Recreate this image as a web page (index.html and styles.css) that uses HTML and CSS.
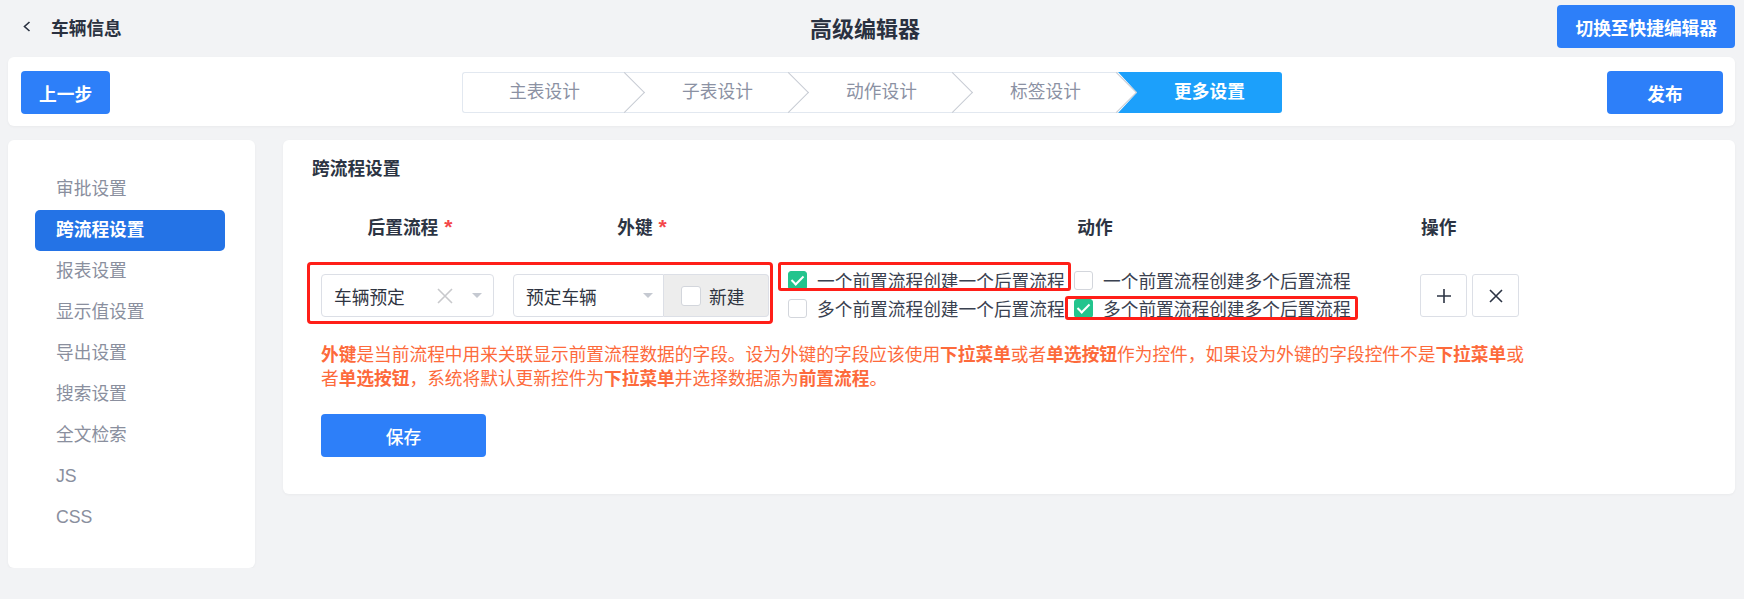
FILE: index.html
```html
<!DOCTYPE html>
<html lang="zh-CN">
<head>
    <meta charset="UTF-8">
    <meta name="viewport" content="width=device-width, initial-scale=1.0">
    <title>高级编辑器</title>
    <link rel="stylesheet" href="styles.css">
</head>
<body>

<header class="topbar">
    <div class="topbar-left">
        <svg class="back-icon" width="8" height="11" viewBox="0 0 8 11"><polyline points="6.5,1 1.5,5.5 6.5,10"/></svg>
        <span class="topbar-name">车辆信息</span>
    </div>
    <h1 class="topbar-title">高级编辑器</h1>
    <div class="topbar-right">
        <button class="btn btn-primary">切换至快捷编辑器</button>
    </div>
</header>

<div class="toolbar card">
    <button class="btn btn-primary">上一步</button>
    <ol class="steps">
        <li class="step">主表设计</li>
        <li class="step">子表设计</li>
        <li class="step">动作设计</li>
        <li class="step">标签设计</li>
        <li class="step active">更多设置</li>
    </ol>
    <button class="btn btn-primary btn-publish">发布</button>
</div>

<div class="workspace">
    <nav class="sidebar card">
        <a class="side-item">审批设置</a>
        <a class="side-item active">跨流程设置</a>
        <a class="side-item">报表设置</a>
        <a class="side-item">显示值设置</a>
        <a class="side-item">导出设置</a>
        <a class="side-item">搜索设置</a>
        <a class="side-item">全文检索</a>
        <a class="side-item">JS</a>
        <a class="side-item">CSS</a>
    </nav>

    <main class="panel card">
        <h2 class="panel-title">跨流程设置</h2>

        <div class="flow-head">
            <div class="col-prev">后置流程<span class="req">*</span></div>
            <div class="col-key">外键<span class="req">*</span></div>
            <div class="col-action">动作</div>
            <div class="col-op">操作</div>
        </div>

        <div class="flow-row">
            <div class="flow-fields">
                <div class="select select-prev">
                    <span>车辆预定</span>
                    <svg class="clear-icon" width="16" height="16" viewBox="0 0 16 16"><path d="M1 1 L15 15 M15 1 L1 15"/></svg>
                    <span class="caret"></span>
                </div>
                <div class="key-group">
                    <div class="select select-key">
                        <span>预定车辆</span>
                        <span class="caret"></span>
                    </div>
                    <label class="addon"><span class="checkbox"></span>新建</label>
                </div>
            </div>

            <div class="flow-actions">
                <label class="check-item marked mark-first"><span class="checkbox checked"></span>一个前置流程创建一个后置流程</label>
                <label class="check-item"><span class="checkbox"></span>一个前置流程创建多个后置流程</label>
                <label class="check-item"><span class="checkbox"></span>多个前置流程创建一个后置流程</label>
                <label class="check-item marked mark-last"><span class="checkbox checked"></span>多个前置流程创建多个后置流程</label>
            </div>

            <div class="flow-ops">
                <button class="icon-btn">
                    <svg width="16" height="16" viewBox="0 0 16 16"><path d="M8 1 V15 M1 8 H15"/></svg>
                </button>
                <button class="icon-btn">
                    <svg width="14" height="14" viewBox="0 0 14 14"><path d="M1 1 L13 13 M13 1 L1 13"/></svg>
                </button>
            </div>
        </div>

        <p class="flow-tip"><b>外键</b>是当前流程中用来关联显示前置流程数据的字段。设为外键的字段应该使用<b>下拉菜单</b>或者<b>单选按钮</b>作为控件，如果设为外键的字段控件不是<b>下拉菜单</b>或者<b>单选按钮</b>，系统将默认更新控件为<b>下拉菜单</b>并选择数据源为<b>前置流程</b>。</p>

        <button class="btn btn-primary btn-save">保存</button>
    </main>
</div>

</body>
</html>
```

FILE: styles.css
```css
body {
    margin: 0;
    padding: 0 9px 0 8px;
    font-family: "Liberation Sans", "Noto Sans CJK SC", sans-serif;
    font-size: 17.7px;
    background: #f2f3f5;
    color: #2c3443;
}

.card {
    background: #fff;
    border-radius: 6px;
    box-shadow: 0 1px 3px rgba(0, 0, 0, 0.04);
}

.btn {
    height: 43px;
    padding: 0 18px;
    border: none;
    border-radius: 4px;
    font-family: inherit;
    font-size: 17.7px;
    font-weight: bold;
    cursor: pointer;
}

.btn-primary {
    background: #2d7ff9;
    color: #fff;
}

/* top bar */
.topbar {
    display: grid;
    grid-template-columns: 1fr auto 1fr;
    align-items: center;
    height: 43px;
    padding: 5px 0 9px 15px;
}

.topbar-left {
    display: flex;
    align-items: center;
    gap: 20px;
}

.back-icon {
    fill: none;
    stroke: #2a3140;
    stroke-width: 1.6;
}

.topbar-name {
    font-weight: bold;
    color: #2a3140;
}

.topbar-title {
    margin: 0 28px 0 0;
    font-size: 22px;
    font-weight: bold;
    color: #2a3140;
}

.topbar-right {
    justify-self: end;
}

/* toolbar with steps */
.toolbar {
    display: grid;
    grid-template-columns: 1fr auto 1fr;
    align-items: center;
    padding: 14px 12px 12px 13px;
}

.toolbar > .btn:first-child {
    justify-self: start;
}

.btn-publish {
    justify-self: end;
    width: 116px;
}

.steps {
    display: flex;
    margin: 0;
    padding: 0;
    list-style: none;
}

.step {
    position: relative;
    box-sizing: border-box;
    width: 164px;
    height: 41px;
    padding-left: 19px;
    border-top: 1px solid #e2e8f0;
    border-bottom: 1px solid #e2e8f0;
    line-height: 39px;
    text-align: center;
    color: #8b91a3;
}

.step:first-child {
    padding-left: 0;
    border-left: 1px solid #e2e8f0;
    border-radius: 3px 0 0 3px;
}

.step:not(:last-child)::after {
    content: "";
    position: absolute;
    top: 5px;
    right: -13px;
    width: 28px;
    height: 28px;
    border-top: 1px solid #c7cbd3;
    border-right: 1px solid #c7cbd3;
    transform: rotate(45deg);
    z-index: 1;
}

.step.active {
    border: none;
    line-height: 41px;
    background: #1ca0fb;
    color: #fff;
    font-weight: bold;
    border-radius: 0 3px 3px 0;
    clip-path: polygon(0 0, 100% 0, 100% 100%, 0 100%, 19px 50%);
}

/* sidebar + panel */
.workspace {
    display: flex;
    align-items: flex-start;
    gap: 28px;
    margin-top: 14px;
}

.sidebar {
    display: flex;
    flex-direction: column;
    width: 247px;
    box-sizing: border-box;
    padding: 29px 30px 30px 27px;
}

.side-item {
    height: 41px;
    padding-left: 21px;
    line-height: 41px;
    border-radius: 5px;
    color: #8a8f9e;
    cursor: pointer;
}

.side-item.active {
    background: #2473e6;
    color: #fff;
    font-weight: bold;
}

.panel {
    flex: 1;
    padding: 17px 24px 37px;
}

.panel-title {
    margin: 0;
    padding-left: 5px;
    font-size: 17.7px;
    line-height: 24px;
    font-weight: bold;
}

.flow-head {
    display: flex;
    margin-top: 35px;
    line-height: 24px;
    font-weight: bold;
}

.col-prev { width: 206px; text-align: center; }
.col-key { width: 258px; text-align: center; }
.col-action { width: 648px; text-align: center; }
.col-op { padding-left: 2px; }

.req {
    margin-left: 6px;
    font-size: 21px;
    line-height: 1;
    color: #f4474a;
}

.flow-row {
    display: flex;
    align-items: flex-start;
    margin-top: 22px;
}

.flow-fields {
    display: flex;
    gap: 19px;
    padding: 9px 1px 4px 11px;
    border: 3px solid #ff1f18;
    border-radius: 4px;
}

.select {
    display: flex;
    align-items: center;
    box-sizing: border-box;
    height: 43px;
    padding: 0 11px 0 12px;
    border: 1px solid #dcdfe6;
    border-radius: 4px;
    color: #2f3441;
}

.select-prev {
    width: 173px;
}

.clear-icon {
    margin-left: auto;
    fill: none;
    stroke: #c8c9cc;
    stroke-width: 1.6;
}

.caret {
    width: 0;
    height: 0;
    margin-left: auto;
    border-left: 5px solid transparent;
    border-right: 5px solid transparent;
    border-top: 5px solid #c5c9d1;
}

.clear-icon + .caret {
    margin-left: 19px;
}

.key-group {
    display: flex;
}

.select-key {
    width: 151px;
    padding-right: 10px;
    border-radius: 4px 0 0 4px;
}

.addon {
    display: flex;
    align-items: center;
    gap: 8px;
    box-sizing: border-box;
    width: 105px;
    height: 43px;
    padding-left: 17px;
    background: #ededed;
    border: 1px solid #dcdfe6;
    border-left: none;
    border-radius: 0 4px 4px 0;
    color: #2f3441;
}

.checkbox {
    display: inline-block;
    box-sizing: border-box;
    width: 19px;
    height: 19px;
    flex-shrink: 0;
    background: #fff;
    border: 1px solid #d3d6dc;
    border-radius: 3px;
}

.addon .checkbox {
    width: 20px;
    height: 20px;
}

.checkbox.checked {
    position: relative;
    background: #23c48d;
    border-color: #23c48d;
}

.checkbox.checked::after {
    content: "";
    position: absolute;
    left: 5px;
    top: 1px;
    width: 5px;
    height: 10px;
    border-right: 2px solid #fff;
    border-bottom: 2px solid #fff;
    transform: rotate(45deg);
}

.flow-actions {
    display: grid;
    grid-template-columns: 286px 286px;
    grid-auto-rows: 28px;
    margin: 4px 0 0 15px;
}

.check-item {
    position: relative;
    display: flex;
    align-items: center;
    gap: 10px;
    justify-self: start;
    color: #3a4150;
}

/* red outline around the chosen options */
.marked::after {
    content: "";
    position: absolute;
    border: 3px solid #ff1f18;
    border-radius: 3px;
}

.mark-first::after {
    top: -4px;
    bottom: 3px;
    left: -10px;
    right: -6px;
}

.mark-last::after {
    top: 2px;
    bottom: 2px;
    left: -9px;
    right: -7px;
}

.flow-ops {
    display: flex;
    gap: 5px;
    margin: 12px 0 0 60px;
}

.icon-btn {
    display: flex;
    align-items: center;
    justify-content: center;
    width: 47px;
    height: 43px;
    padding: 0;
    background: #fff;
    border: 1px solid #dcdfe6;
    border-radius: 3px;
    cursor: pointer;
}

.icon-btn svg {
    fill: none;
    stroke: #2c3444;
    stroke-width: 1.6;
}

.flow-tip {
    max-width: 1212px;
    margin: 19px 0 0 14px;
    line-height: 24px;
    color: #fd6a3b;
}

.flow-tip b {
    font-weight: bold;
}

.btn-save {
    width: 165px;
    margin: 23px 0 0 14px;
    font-weight: 500;
}
```
